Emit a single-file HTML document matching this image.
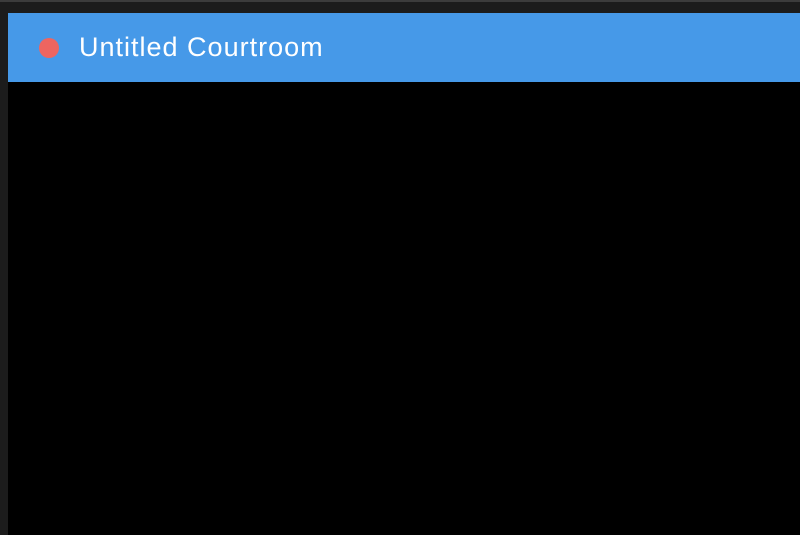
<!DOCTYPE html>
<html><head><style>
body{margin:0;width:800px;height:535px;background:#1c1c1c;position:relative;overflow:hidden;font-family:"Liberation Sans",sans-serif}
.top{position:absolute;left:0;top:0;width:800px;height:2px;background:#3c3c3c}
.bar{position:absolute;left:8px;top:13px;width:792px;height:69px;background:#4699e8}
.dot{position:absolute;left:39px;top:38px;width:20px;height:20px;border-radius:50%;background:#ee6560}
.t{position:absolute;left:79px;top:31px;font-size:27px;letter-spacing:1px;color:#fff;line-height:32px}
.main{position:absolute;left:8px;top:82px;width:792px;height:453px;background:#000}
</style></head><body>
<div class="top"></div>
<div class="bar"></div>
<div class="dot"></div>
<div class="t">Untitled Courtroom</div>
<div class="main"></div>
</body></html>
